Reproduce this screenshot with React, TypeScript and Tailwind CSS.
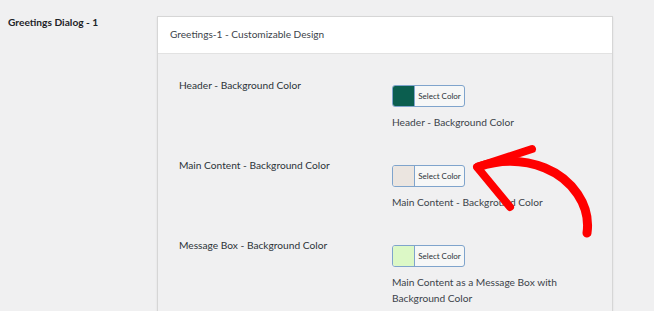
import React from 'react';

const ROWS = [
    {
        label: 'Header - Background Color',
        swatch: 'bg-[#0b5e4f]',
        desc: ['Header - Background Color'],
    },
    {
        label: 'Main Content - Background Color',
        swatch: 'bg-[#ebe5e0]',
        desc: ['Main Content - Background Color'],
    },
    {
        label: 'Message Box - Background Color',
        swatch: 'bg-[#dcf8c6]',
        desc: ['Main Content as a Message Box with', 'Background Color'],
    },
];

function ColorButton({ swatch }: { swatch: string }) {
    return (
        <button
            type="button"
            className="flex h-[22px] w-[73px] items-stretch overflow-hidden rounded-[3px] border border-[#7fa4cc] bg-[#f6f7f7] p-0"
        >
            <span className={`block w-[22px] shrink-0 border-r border-[#7fa4cc] ${swatch}`} />
            <span className="flex flex-1 items-center justify-center whitespace-nowrap text-[8px] text-[#2c3338]">Select Color</span>
        </button>
    );
}

export default function App() {
    return (
        <div className="relative h-[311px] w-[654px] overflow-hidden bg-[#f0f0f1] font-['Lato',sans-serif]">
            <div className="flex">
                {/* Section title */}
                <div className="w-[157px] shrink-0 pl-2 pt-[13px] text-[10.2px] font-bold leading-[18px] text-[#1d2327]">
                    Greetings Dialog - 1
                </div>

                {/* Card */}
                <div className="mt-4 w-[456px] border border-[#d6d6d6] shadow-[0_1px_2px_rgba(0,0,0,0.08)]">
                    <div className="flex h-[37px] items-center border-b border-[#e2e2e2] bg-white pl-3 text-[10.1px] text-[#3c434a]">
                        Greetings-1 - Customizable Design
                    </div>
                    <div className="h-[260px] bg-[#f0f0f1] pl-[21px]">
                        {ROWS.map(row => (
                            <div key={row.label} className="flex h-[80px] pt-[23px]">
                                <div className="w-[213px] shrink-0 text-[10.2px] leading-4 text-[#2c3338]">
                                    {row.label}
                                </div>
                                <div className="pt-2">
                                    <ColorButton swatch={row.swatch} />
                                    <div className="mt-[7px] text-[10.2px] leading-4 text-[#3c434a]">
                                        {row.desc.map(line => (
                                            <div key={line}>{line}</div>
                                        ))}
                                    </div>
                                </div>
                            </div>
                        ))}
                    </div>
                </div>
            </div>

            {/* Red arrow annotation */}
            <svg className="pointer-events-none absolute left-0 top-0" width="654" height="311" viewBox="0 0 654 311">
                <path
                    d="M 587 233 C 591 205 572 179 545 168 C 522 159 498 160 478 167"
                    fill="none"
                    stroke="#ff0000"
                    strokeWidth="9"
                    strokeLinecap="round"
                />
                <path
                    d="M 532 149 L 477 167 L 510 207"
                    fill="none"
                    stroke="#ff0000"
                    strokeWidth="8"
                    strokeLinecap="round"
                    strokeLinejoin="round"
                />
            </svg>
        </div>
    );
}
